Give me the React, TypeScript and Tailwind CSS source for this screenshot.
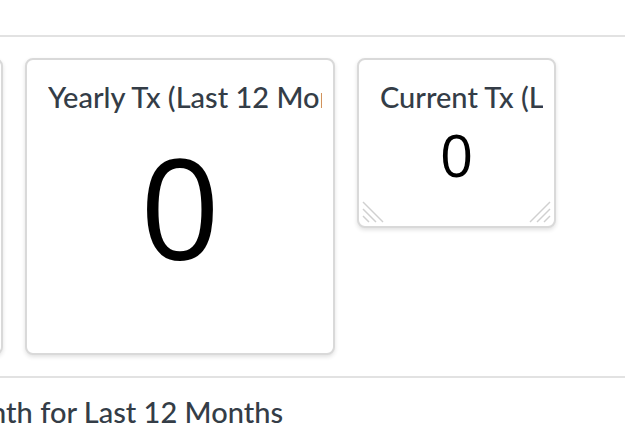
const textFont = { fontFamily: 'Lato, "Noto Sans", sans-serif' }

type TileProps = {
  title: string
  value: string
  big?: boolean
  resizable?: boolean
}

function Tile({ title, value, big, resizable }: TileProps) {
  return (
    <div
      className={`relative flex shrink-0 flex-col rounded-lg border-2 border-[#d9d9d9] bg-white shadow-[0_2px_4px_rgba(0,0,0,0.12)] ${
        big ? 'h-[297px] w-[310px]' : 'h-[170px] w-[199px]'
      }`}
    >
      <div className="ml-[21px] mr-[11px] mt-[19px] overflow-hidden whitespace-nowrap">
        <span className="text-[29px] font-medium leading-[36px] text-[#343d47]" style={textFont}>
          {title}
        </span>
      </div>
      <div
        className={`flex justify-center text-black ${
          big ? 'mt-[16px] text-[140px] leading-[150px]' : 'mt-[8px] text-[58px] leading-[64px]'
        }`}
        style={{ fontFamily: '"Open Sans", sans-serif' }}
      >
        {value}
      </div>
      {resizable && (
        <>
          <svg className="absolute bottom-[2px] left-[2px]" width="24" height="24" viewBox="0 0 24 24">
            <g stroke="#d0d0d0" strokeWidth="1.5">
              <line x1="2" y1="2" x2="22" y2="22" />
              <line x1="2" y1="9" x2="15" y2="22" />
              <line x1="2" y1="16" x2="8" y2="22" />
            </g>
          </svg>
          <svg className="absolute bottom-[2px] right-[2px]" width="24" height="24" viewBox="0 0 24 24">
            <g stroke="#d0d0d0" strokeWidth="1.5">
              <line x1="22" y1="2" x2="2" y2="22" />
              <line x1="22" y1="9" x2="9" y2="22" />
              <line x1="22" y1="16" x2="16" y2="22" />
            </g>
          </svg>
        </>
      )}
    </div>
  )
}

export default function App() {
  return (
    <div className="h-[428px] w-[625px] overflow-hidden bg-white">
      <div className="h-[35px]" />
      <div className="h-[2px] w-full bg-[#e2e2e2]" />
      <div className="ml-[-307px] flex items-start gap-[22px] pt-[21px]">
        <Tile title="Monthly Tx (This Month)" value="0" big />
        <Tile title="Yearly Tx (Last 12 Months)" value="0" big />
        <Tile title="Current Tx (Last Hour)" value="0" resizable />
      </div>
      <div className="mt-[21px] h-[2px] w-full bg-[#e2e2e2]" />
      <div className="mt-[16px] flex w-[283px] justify-end whitespace-nowrap">
        <span className="text-[29px] font-medium leading-[36px] text-[#343d47]" style={textFont}>
          Transactions Per Month for Last 12 Months
        </span>
      </div>
    </div>
  )
}
